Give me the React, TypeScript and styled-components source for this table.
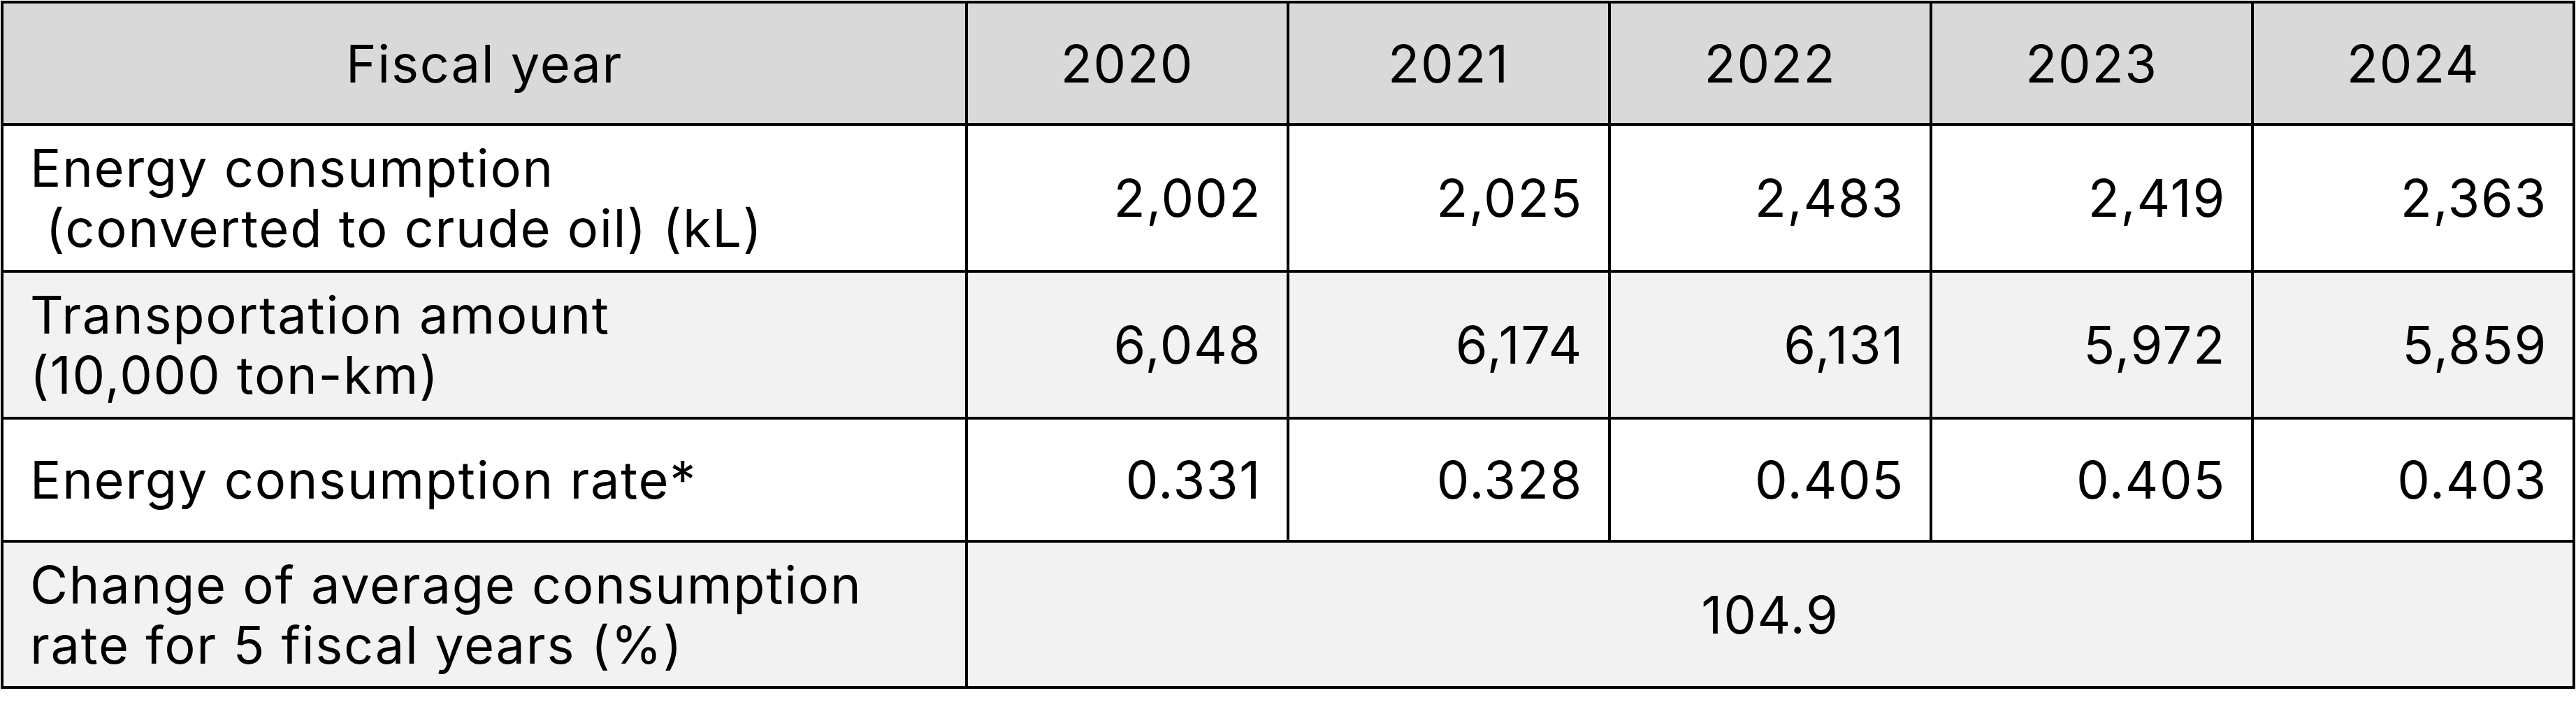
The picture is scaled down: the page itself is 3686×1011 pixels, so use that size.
import React from 'react'
import styled, {createGlobalStyle} from 'styled-components'

const GlobalStyle = createGlobalStyle`
  html, body {
    margin: 0;
    padding: 0;
    background: #fff;
  }
  body {
    font-family: Inter, "Noto Sans CJK JP", sans-serif;
    color: #000;
  }
`

const Table = styled.table`
  border-collapse: collapse;
  table-layout: fixed;
  width: 3682px;
  margin: 1px;
  font-size: 74px;
  line-height: 86px;
  letter-spacing: 1.7px;
  font-weight: 400;
`

const Col = styled.col<{$width: number}>`
  width: ${(p) => p.$width}px;
`

const Row = styled.tr<{$bg: string; $height: number}>`
  height: ${(p) => p.$height}px;
  background: ${(p) => p.$bg};
`

const Cell = styled.td<{$align?: 'left' | 'center' | 'right'}>`
  border: 4px solid #000;
  padding: 0 ${(p) => (p.$align === 'right' ? 36 : 38)}px 0 38px;
  text-align: ${(p) => p.$align || 'left'};
  vertical-align: middle;
  white-space: pre;
  overflow: hidden;
`

const HeadCell = styled(Cell).attrs({as: 'th'})`
  font-weight: 400;
`

const Line = styled.div`
  white-space: pre;
`

interface IDataRow {
	label: string[]
	values: string[]
	bg: string
	height: number
}

const years = ['2020', '2021', '2022', '2023', '2024']

const rows: IDataRow[] = [
	{
		label: ['Energy consumption', ' (converted to crude oil) (kL)'],
		values: ['2,002', '2,025', '2,483', '2,419', '2,363'],
		bg: '#ffffff',
		height: 210,
	},
	{
		label: ['Transportation amount', '(10,000 ton-km)'],
		values: ['6,048', '6,174', '6,131', '5,972', '5,859'],
		bg: '#f2f2f2',
		height: 210,
	},
	{
		label: ['Energy consumption rate*'],
		values: ['0.331', '0.328', '0.405', '0.405', '0.403'],
		bg: '#ffffff',
		height: 176,
	},
]

const Label = ({lines}: {lines: string[]}) => (
	<>
		{lines.map((l, i) => <Line key={i}>{l}</Line>)}
	</>
)

const App = () => {
	return (
		<>
			<GlobalStyle/>
			<Table>
				<colgroup>
					<Col $width={1380}/>
					{years.map((y) => <Col key={y} $width={460}/>)}
				</colgroup>
				<thead>
					<Row $bg="#d9d9d9" $height={175}>
						<HeadCell $align="center">Fiscal year</HeadCell>
						{years.map((y) => <HeadCell key={y} $align="center">{y}</HeadCell>)}
					</Row>
				</thead>
				<tbody>
					{rows.map((r) => (
						<Row key={r.label[0]} $bg={r.bg} $height={r.height}>
							<Cell><Label lines={r.label}/></Cell>
							{r.values.map((v, i) => <Cell key={i} $align="right">{v}</Cell>)}
						</Row>
					))}
					<Row $bg="#f2f2f2" $height={209}>
						<Cell><Label lines={['Change of average consumption', 'rate for 5 fiscal years (%)']}/></Cell>
						<Cell colSpan={5} $align="center">104.9</Cell>
					</Row>
				</tbody>
			</Table>
		</>
	)
}

export default App
